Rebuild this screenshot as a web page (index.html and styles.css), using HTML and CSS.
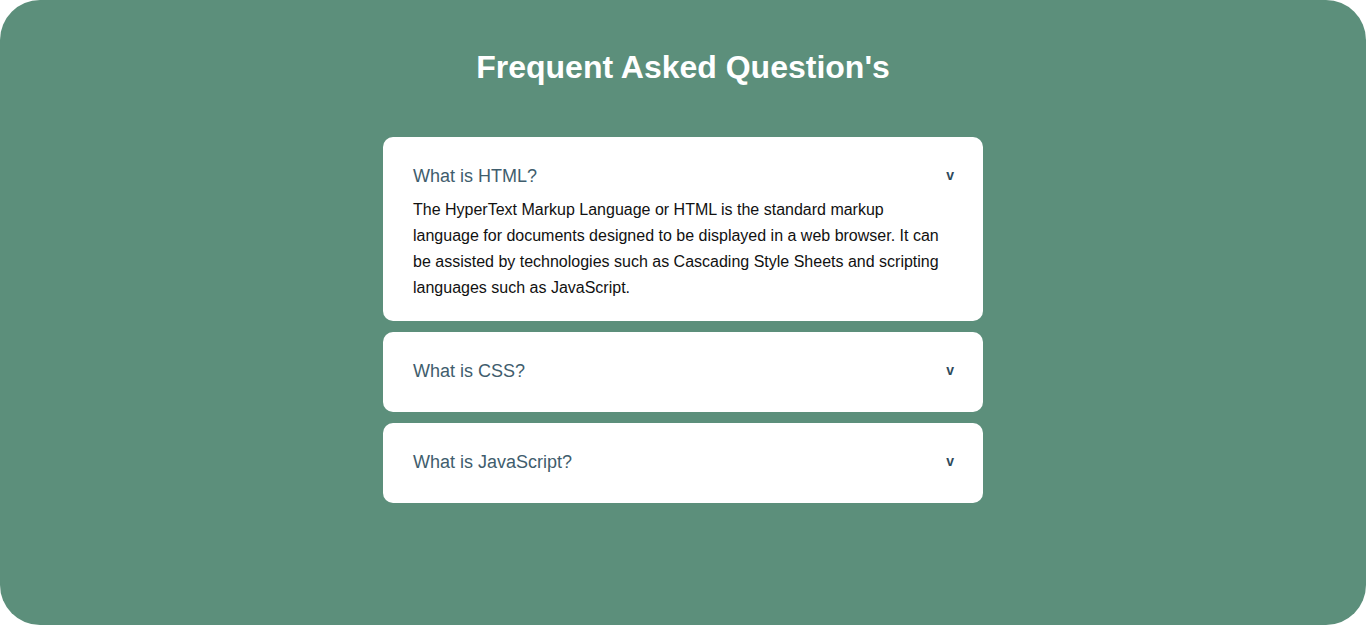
FILE: index.html
```html
<!DOCTYPE html>
<html lang="en">
<head>
<meta charset="utf-8">
<title>FAQ</title>
<link rel="stylesheet" href="styles.css">
</head>
<body>
<main class="page">
  <h1 class="title">Frequent Asked Question's</h1>
  <section class="faq">
    <div class="item open">
      <div class="question"><span>What is HTML?</span><span class="chev">v</span></div>
      <p class="answer">The HyperText Markup Language or HTML is the standard markup language for documents designed to be displayed in a web browser. It can be assisted by technologies such as Cascading Style Sheets and scripting languages such as JavaScript.</p>
    </div>
    <div class="item">
      <div class="question"><span>What is CSS?</span><span class="chev">v</span></div>
    </div>
    <div class="item">
      <div class="question"><span>What is JavaScript?</span><span class="chev">v</span></div>
    </div>
  </section>
</main>
</body>
</html>
```
FILE: styles.css
```css
html, body {
  margin: 0;
  padding: 0;
  background: #ffffff;
}
body {
  font-family: "Liberation Sans", Arial, sans-serif;
}
.page {
  box-sizing: border-box;
  width: 1366px;
  height: 625px;
  background: #5c8f7b;
  border-radius: 40px;
  padding-top: 49px;
  display: flex;
  flex-direction: column;
  align-items: center;
  overflow: hidden;
}
.title {
  margin: 0;
  color: #ffffff;
  font-size: 32px;
  font-weight: 700;
  line-height: 37px;
}
.faq {
  margin-top: 51px;
  width: 600px;
  display: flex;
  flex-direction: column;
  gap: 11px;
}
.item {
  background: #ffffff;
  border-radius: 10px;
  padding: 29px 30px 31px;
}
.item.open {
  padding-bottom: 20px;
}
.question {
  display: flex;
  justify-content: space-between;
  align-items: flex-start;
  color: #3f5d6d;
  font-size: 18px;
  line-height: 20px;
}
.chev {
  font-size: 14px;
  line-height: 18px;
  font-weight: 700;
  color: #2f4a5c;
  margin-right: -1px;
}
.answer {
  margin: 11px 0 0;
  color: #111111;
  font-size: 16px;
  line-height: 26px;
}
```
